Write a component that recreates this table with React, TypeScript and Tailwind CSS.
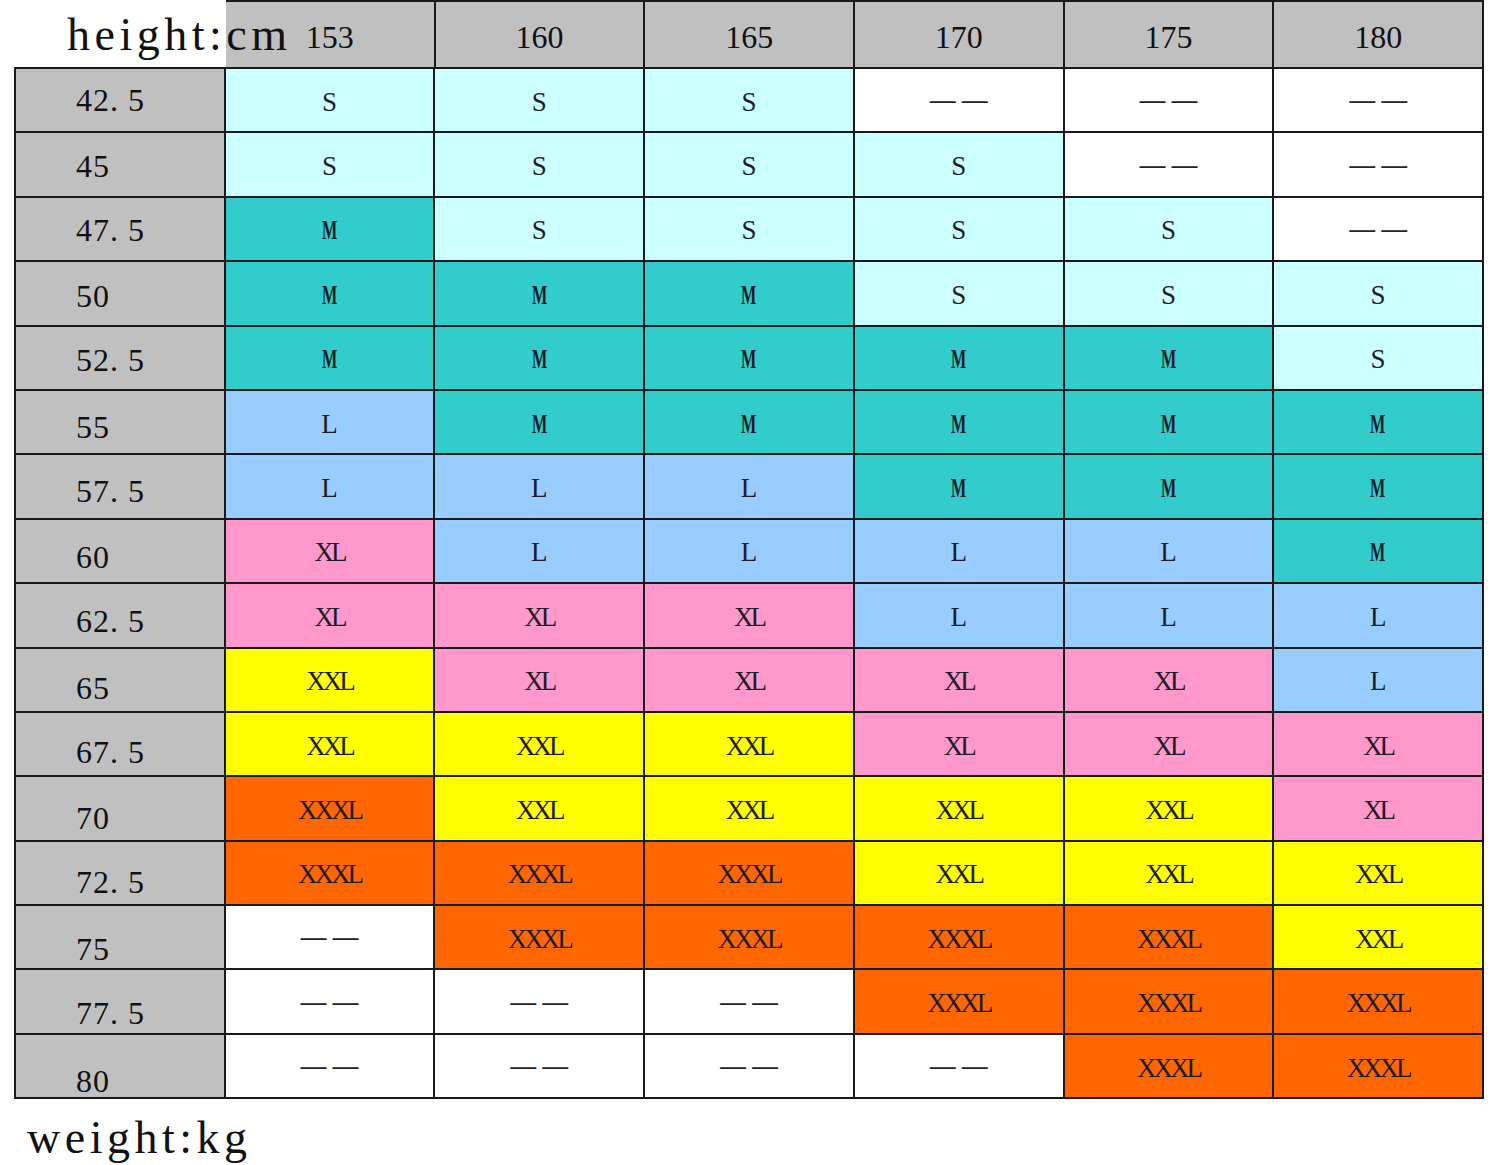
import React from 'react';

type Size = 'S' | 'M' | 'L' | 'XL' | 'XXL' | 'XXXL' | '-';

const heights = ['153', '160', '165', '170', '175', '180'];

// weight label, label nudge (the labels drift down row by row), sizes per height
const rows: { kg: string; nudge: string; sizes: Size[] }[] = [
  { kg: '42. 5', nudge: 'translate-y-[0px]', sizes: ['S', 'S', 'S', '-', '-', '-'] },
  { kg: '45', nudge: 'translate-y-[1px]', sizes: ['S', 'S', 'S', 'S', '-', '-'] },
  { kg: '47. 5', nudge: 'translate-y-[1px]', sizes: ['M', 'S', 'S', 'S', 'S', '-'] },
  { kg: '50', nudge: 'translate-y-[3px]', sizes: ['M', 'M', 'M', 'S', 'S', 'S'] },
  { kg: '52. 5', nudge: 'translate-y-[2px]', sizes: ['M', 'M', 'M', 'M', 'M', 'S'] },
  { kg: '55', nudge: 'translate-y-[5px]', sizes: ['L', 'M', 'M', 'M', 'M', 'M'] },
  { kg: '57. 5', nudge: 'translate-y-[4px]', sizes: ['L', 'L', 'L', 'M', 'M', 'M'] },
  { kg: '60', nudge: 'translate-y-[6px]', sizes: ['XL', 'L', 'L', 'L', 'L', 'M'] },
  { kg: '62. 5', nudge: 'translate-y-[6px]', sizes: ['XL', 'XL', 'XL', 'L', 'L', 'L'] },
  { kg: '65', nudge: 'translate-y-[8px]', sizes: ['XXL', 'XL', 'XL', 'XL', 'XL', 'L'] },
  { kg: '67. 5', nudge: 'translate-y-[8px]', sizes: ['XXL', 'XXL', 'XXL', 'XL', 'XL', 'XL'] },
  { kg: '70', nudge: 'translate-y-[10px]', sizes: ['XXXL', 'XXL', 'XXL', 'XXL', 'XXL', 'XL'] },
  { kg: '72. 5', nudge: 'translate-y-[9px]', sizes: ['XXXL', 'XXXL', 'XXXL', 'XXL', 'XXL', 'XXL'] },
  { kg: '75', nudge: 'translate-y-[12px]', sizes: ['-', 'XXXL', 'XXXL', 'XXXL', 'XXXL', 'XXL'] },
  { kg: '77. 5', nudge: 'translate-y-[11px]', sizes: ['-', '-', '-', 'XXXL', 'XXXL', 'XXXL'] },
  { kg: '80', nudge: 'translate-y-[15px]', sizes: ['-', '-', '-', '-', 'XXXL', 'XXXL'] },
];

const fills: Record<Size, string> = {
  S: 'bg-[#ccffff]',
  M: 'bg-[#33cccc]',
  L: 'bg-[#99ccff]',
  XL: 'bg-[#ff99cc]',
  XXL: 'bg-[#ffff00]',
  XXXL: 'bg-[#ff6600]',
  '-': 'bg-white',
};

const serif = "font-['Liberation_Serif',serif]";

const SizeCell: React.FC<{ size: Size }> = ({ size }) => {
  let label: React.ReactNode = size;
  // the M in the chart is tall, narrow and heavy
  if (size === 'M') label = <span className="inline-block scale-x-[0.6] font-bold">M</span>;

  return (
    <div className={`flex h-[62.4px] items-center justify-center ${fills[size]}`}>
      {size === '-' ? (
        <span className="font-['Liberation_Sans',sans-serif] text-[26px] leading-none tracking-[6px] text-[#222] pl-[6px]">
          ——
        </span>
      ) : (
        <span
          className={`${serif} pt-[4px] text-[27px] leading-none text-[#1c1c28] ${
            size.length > 1 ? 'tracking-[-3px] pl-[-3px]' : ''
          }`}
        >
          {label}
        </span>
      )}
    </div>
  );
};

export default function App() {
  return (
    <div className="h-[1165px] w-[1500px] overflow-hidden bg-white text-[#111]">
      {/* header row */}
      <div className="flex pl-[14px]">
        <div className="flex h-[67px] w-[212px] items-center bg-white pl-[53px]">
          <span className={`relative z-10 whitespace-nowrap ${serif} pt-[2px] text-[46px] leading-none tracking-[4.5px]`}>
            height:cm
          </span>
        </div>
        <div className="grid w-[1258px] grid-cols-6 gap-x-[2px] bg-[#1a1a1a] pr-[2px] pt-[2px]">
          {heights.map(h => (
            <div
              key={h}
              className={`flex h-[65px] items-center justify-center bg-[#c0c0c0] pt-[4px] ${serif} text-[32px] leading-none`}
            >
              {h}
            </div>
          ))}
        </div>
      </div>

      {/* body */}
      <div className="ml-[14px] grid w-[1470px] grid-cols-7 gap-[2px] bg-[#1a1a1a] p-[2px]">
        {rows.map(r => (
          <React.Fragment key={r.kg}>
            <div className="flex h-[62.4px] items-center bg-[#c0c0c0] pl-[60px]">
              <span className={`${serif} whitespace-pre text-[32px] leading-none tracking-[1px] ${r.nudge}`}>
                {r.kg}
              </span>
            </div>
            {r.sizes.map((s, i) => (
              <SizeCell key={i} size={s} />
            ))}
          </React.Fragment>
        ))}
      </div>

      <div className={`pl-[27px] pt-[16px] ${serif} text-[46px] leading-none tracking-[4.5px]`}>weight:kg</div>
    </div>
  );
}
